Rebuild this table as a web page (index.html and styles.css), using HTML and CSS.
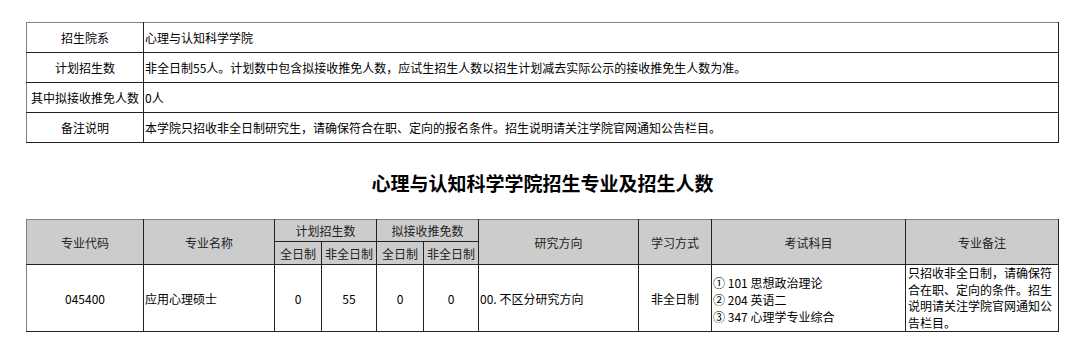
FILE: index.html
```html
<!DOCTYPE html>
<html lang="zh-CN">
<head>
  <meta charset="UTF-8" />
  <title>心理与认知科学学院招生专业及招生人数</title>
  <link rel="stylesheet" href="styles.css">
</head>
<body>
  <div class="page">
    <table class="info">
      <colgroup>
        <col class="col-label" />
        <col />
      </colgroup>
      <tr>
        <th>招生院系</th>
        <td>心理与认知科学学院</td>
      </tr>
      <tr>
        <th>计划招生数</th>
        <td>非全日制55人。计划数中包含拟接收推免人数，应试生招生人数以招生计划减去实际公示的接收推免生人数为准。</td>
      </tr>
      <tr>
        <th>其中拟接收推免人数</th>
        <td>0人</td>
      </tr>
      <tr>
        <th>备注说明</th>
        <td>本学院只招收非全日制研究生，请确保符合在职、定向的报名条件。招生说明请关注学院官网通知公告栏目。</td>
      </tr>
    </table>

    <h2 class="title">心理与认知科学学院招生专业及招生人数</h2>

    <table class="majors">
      <colgroup>
        <col class="col-code" />
        <col class="col-name" />
        <col class="col-full" />
        <col class="col-part" />
        <col class="col-full" />
        <col class="col-part" />
        <col class="col-dir" />
        <col class="col-mode" />
        <col class="col-exam" />
        <col class="col-note" />
      </colgroup>
      <thead>
        <tr class="head-top">
          <th rowspan="2">专业代码</th>
          <th rowspan="2">专业名称</th>
          <th colspan="2">计划招生数</th>
          <th colspan="2">拟接收推免数</th>
          <th rowspan="2">研究方向</th>
          <th rowspan="2">学习方式</th>
          <th rowspan="2">考试科目</th>
          <th rowspan="2">专业备注</th>
        </tr>
        <tr class="head-sub">
          <th>全日制</th>
          <th>非全日制</th>
          <th>全日制</th>
          <th>非全日制</th>
        </tr>
      </thead>
      <tbody>
        <tr>
          <td class="center">045400</td>
          <td>应用心理硕士</td>
          <td class="center">0</td>
          <td class="center">55</td>
          <td class="center">0</td>
          <td class="center">0</td>
          <td>00. 不区分研究方向</td>
          <td class="center">非全日制</td>
          <td class="exam">① 101 思想政治理论<br>② 204 英语二<br>③ 347 心理学专业综合</td>
          <td class="note">只招收非全日制，请确保符合在职、定向的条件。招生说明请关注学院官网通知公告栏目。</td>
        </tr>
      </tbody>
    </table>
  </div>
</body>
</html>
```

FILE: styles.css
```css
body {
  margin: 0;
  background: #fff;
  color: #000;
  font-family: "Noto Sans CJK SC", "Noto Sans", sans-serif;
  font-size: 12px;
}

.page {
  padding: 22px 0 0 26px;
  width: 1033px;
}

table {
  border-collapse: collapse;
  table-layout: fixed;
  width: 1033px;
  border-top: 1px solid #808080;
  border-left: 1px solid #808080;
  border-bottom: 1px solid #808080;
  border-right: 1px solid #000;
}

th,
td {
  border: 1px solid #222;
  padding: 0 2px;
  line-height: 17px;
  font-weight: normal;
  vertical-align: middle;
}

tr:first-child > th,
tr:first-child > td {
  border-top-color: #808080;
}

tr > :first-child {
  border-left-color: #808080;
}

/* info table */
.col-label { width: 117px; }

.info th,
.info td {
  height: 29px;
}

.info th {
  text-align: center;
  padding: 0;
}

.info td {
  text-align: left;
  padding: 0 1px;
}

.title {
  margin: 26px 0 23px;
  text-align: center;
  font-size: 19px;
  line-height: 27px;
  font-weight: bold;
}

/* majors table */
.col-code { width: 117px; }
.col-name { width: 131px; }
.col-full { width: 47px; }
.col-part { width: 55px; }
.col-dir  { width: 160px; }
.col-mode { width: 73px; }
.col-exam { width: 194px; }
.col-note { width: 153px; }

.majors th {
  background: #cccccc;
  color: #222;
  text-align: center;
  padding: 0;
}

.head-top th {
  height: 21px;
}

.head-sub th {
  height: 22px;
}

.majors td {
  text-align: left;
  padding: 0 1px;
}

.majors td.center {
  text-align: center;
}

.majors td.exam {
  line-height: 17px;
  padding-top: 2px;
}

.majors td.note {
  vertical-align: top;
  line-height: 16.5px;
  padding: 0 1px 0 2px;
}
```
